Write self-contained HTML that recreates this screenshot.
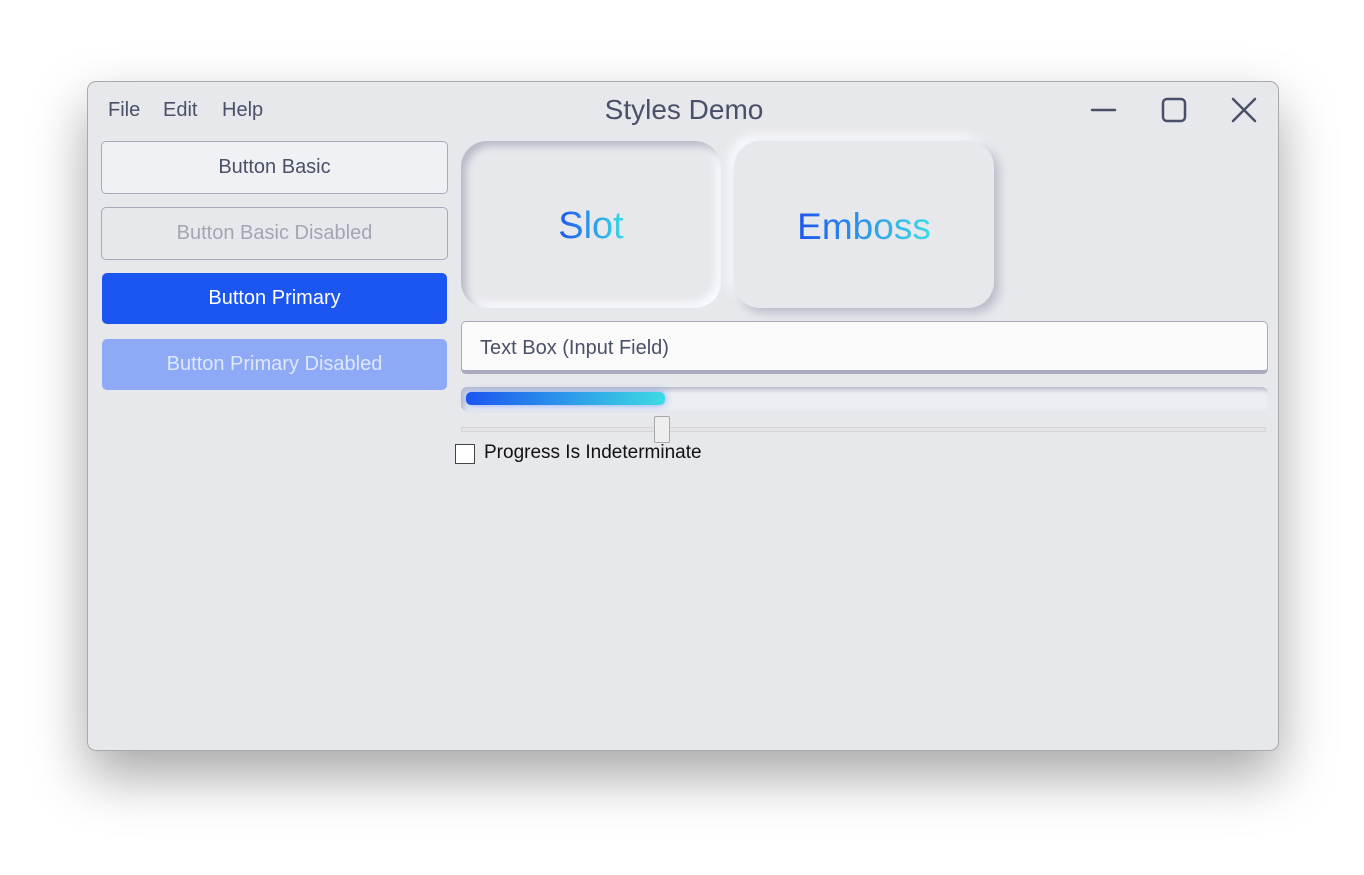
<!DOCTYPE html>
<html><head><meta charset="utf-8"><style>
*{margin:0;padding:0;box-sizing:border-box}
body{width:1364px;height:875px;background:#fff;position:relative;overflow:hidden;font-family:"Liberation Sans","DejaVu Sans",sans-serif}
.win{position:absolute;left:87px;top:81px;width:1192px;height:670px;background:#e7e8ec;border:1px solid #a9a9ad;border-radius:9px;box-shadow:0 25px 55px rgba(0,0,0,0.35)}
.a{position:absolute}
.menu{top:17px;font-size:20px;color:#4a5068}
.btn{position:absolute;left:13px;width:347px;height:53px;border-radius:5px;font-size:20px;display:flex;align-items:center;justify-content:center}
.grad{background:linear-gradient(90deg,#1c55f0,#3ddbe3);-webkit-background-clip:text;background-clip:text;color:transparent}
</style></head><body>
<div class="win">
<div class="a menu" style="left:20px">File</div>
<div class="a menu" style="left:75px">Edit</div>
<div class="a menu" style="left:134px">Help</div>
<div class="a" style="left:0;width:1192px;top:12px;text-align:center;font-size:28px;color:#4a5068">Styles Demo</div>
<svg class="a" style="left:995px;top:10px" width="190" height="40" viewBox="0 0 190 40">
<g stroke="#4a5068" stroke-width="2.5" fill="none" stroke-linecap="round">
<line x1="9" y1="18" x2="32" y2="18"/>
<rect x="80" y="7" width="22" height="22" rx="4"/>
<line x1="150" y1="7" x2="172" y2="29"/><line x1="172" y1="7" x2="150" y2="29"/>
</g></svg>
<div class="btn" style="top:59px;background:#f0f1f5;border:1px solid #a7a9bc;color:#4a5068">Button Basic</div>
<div class="btn" style="top:125px;background:#e7e8ec;border:1px solid #a7a9bc;color:#a3a6b2">Button Basic Disabled</div>
<div class="btn" style="top:191px;left:14px;width:345px;height:51px;background:#1b55f2;color:#fff">Button Primary</div>
<div class="btn" style="top:257px;left:14px;width:345px;height:51px;background:#8eaaf6;color:#dfe7fd">Button Primary Disabled</div>
<div class="a" style="left:373px;top:59px;width:260px;height:167px;border-radius:26px;background:#e7e8ec;box-shadow:inset 5px 5px 8px #b9bac8,inset -5px -5px 8px #fafbff;display:flex;align-items:center;justify-content:center;font-size:38px;padding-top:4px"><span class="grad">Slot</span></div>
<div class="a" style="left:646px;top:59px;width:260px;height:167px;border-radius:26px;background:#e7e8ec;box-shadow:5px 5px 10px #b9bac8,-5px -5px 10px #fafbff;display:flex;align-items:center;justify-content:center;font-size:37px;padding-top:4px"><span class="grad">Emboss</span></div>
<div class="a" style="left:373px;top:239px;width:807px;height:53px;background:#fafafa;border:1px solid #a7a9bc;border-bottom:4px solid #a9abbd;border-radius:5px;font-size:20px;color:#4a5068;padding:15px 0 0 18px">Text Box (Input Field)</div>
<div class="a" style="left:373px;top:305px;width:807px;height:24px;border-radius:6px;background:#eceef3;box-shadow:inset 3px 3px 5px #b9bac8"></div>
<div class="a" style="left:378px;top:310px;width:199px;height:13px;border-radius:5px;background:linear-gradient(90deg,#1c55f0,#3ddbe3);box-shadow:0 0 8px rgba(60,120,255,0.6)"></div>
<div class="a" style="left:373px;top:345px;width:805px;height:5px;border:1px solid #d4d4d8;background:#e4e4e8"></div>
<div class="a" style="left:566px;top:334px;width:16px;height:27px;border:1px solid #a8a8a8;background:#eee;border-radius:2px"></div>
<div class="a" style="left:367px;top:362px;width:20px;height:20px;border:1px solid #444;background:#fff"></div>
<div class="a" style="left:396px;top:360px;font-size:19px;color:#111">Progress Is Indeterminate</div>
</div>
</body></html>
